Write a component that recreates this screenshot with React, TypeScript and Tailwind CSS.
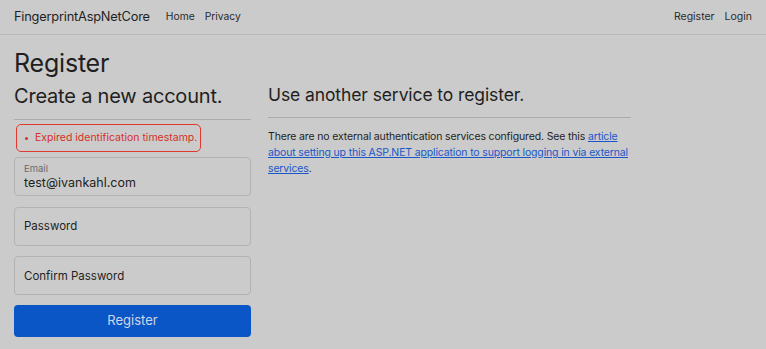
import React from "react";

const Field = ({ label, value }: { label: string; value?: string }) => (
  <div className="h-[39px] rounded-[4px] border border-[#b3b3b5] px-[9px] flex flex-col justify-center">
    {value ? (
      <>
        <span className="text-[9.5px] leading-[12px] text-[#6a6a6c]">{label}</span>
        <span className="text-[12.5px] leading-[16px] text-[#1f1f21]">{value}</span>
      </>
    ) : (
      <span className="text-[11.5px] leading-[16px] text-[#1f1f21]">{label}</span>
    )}
  </div>
);

const App = () => {
  return (
    <div
      className="w-[766px] h-[349px] overflow-hidden bg-[#cbcbcb] text-[#1f1f21]"
      style={{ fontFamily: "Inter, 'Noto Sans', sans-serif" }}
    >
      <nav className="h-[35px] border-b border-[#b9b9b9] flex items-center px-[14px]">
        <span className="text-[12.8px] tracking-[-0.2px] mr-[16px]">FingerprintAspNetCore</span>
        <div className="flex gap-[10px] text-[10.3px] text-[#2a2a2c]">
          <span>Home</span>
          <span>Privacy</span>
        </div>
        <div className="ml-auto flex gap-[10px] text-[10.5px] text-[#2a2a2c]">
          <span>Register</span>
          <span>Login</span>
        </div>
      </nav>

      <div className="px-[14px]">
        <h1 className="text-[25px] leading-[30px] mt-[13px] font-normal tracking-[-0.2px]">Register</h1>
        <div className="flex gap-[17px]">
          <div className="w-[237px]">
            <h2 className="text-[20px] leading-[26px] mt-[5px] tracking-[-0.2px]">Create a new account.</h2>
            <hr className="mt-[10px] border-t border-[#ababab]" />
            <div className="mt-[4px] ml-[2px] w-[185px] h-[28px] rounded-[5px] border-[1.5px] border-[#e2372d] flex items-center pl-[8px] text-[10.5px] text-[#d62f26]">
              <span className="w-[3px] h-[3px] rounded-full bg-[#d62f26] mr-[7px]" />
              Expired identification timestamp.
            </div>
            <div className="mt-[5px] flex flex-col gap-[10.5px]">
              <Field label="Email" value="test@ivankahl.com" />
              <Field label="Password" />
              <Field label="Confirm Password" />
            </div>
            <button className="mt-[10px] w-full h-[32px] rounded-[4px] bg-[#0b56c6] text-[#cdd7ea] text-[13px]">
              Register
            </button>
          </div>
          <div className="w-[363px]">
            <h2 className="text-[17.5px] leading-[24px] mt-[5px] tracking-[-0.1px]">Use another service to register.</h2>
            <hr className="mt-[10px] border-t border-[#ababab]" />
            <p className="mt-[11px] text-[10.5px] leading-[16px] tracking-[-0.15px] text-[#1f1f21]">
              There are no external authentication services configured. See this{" "}
              <a className="text-[#1a57c9] underline">
                article about setting up this ASP.NET application to support logging in via external services
              </a>
              .
            </p>
          </div>
        </div>
      </div>
    </div>
  );
};

export default App;
